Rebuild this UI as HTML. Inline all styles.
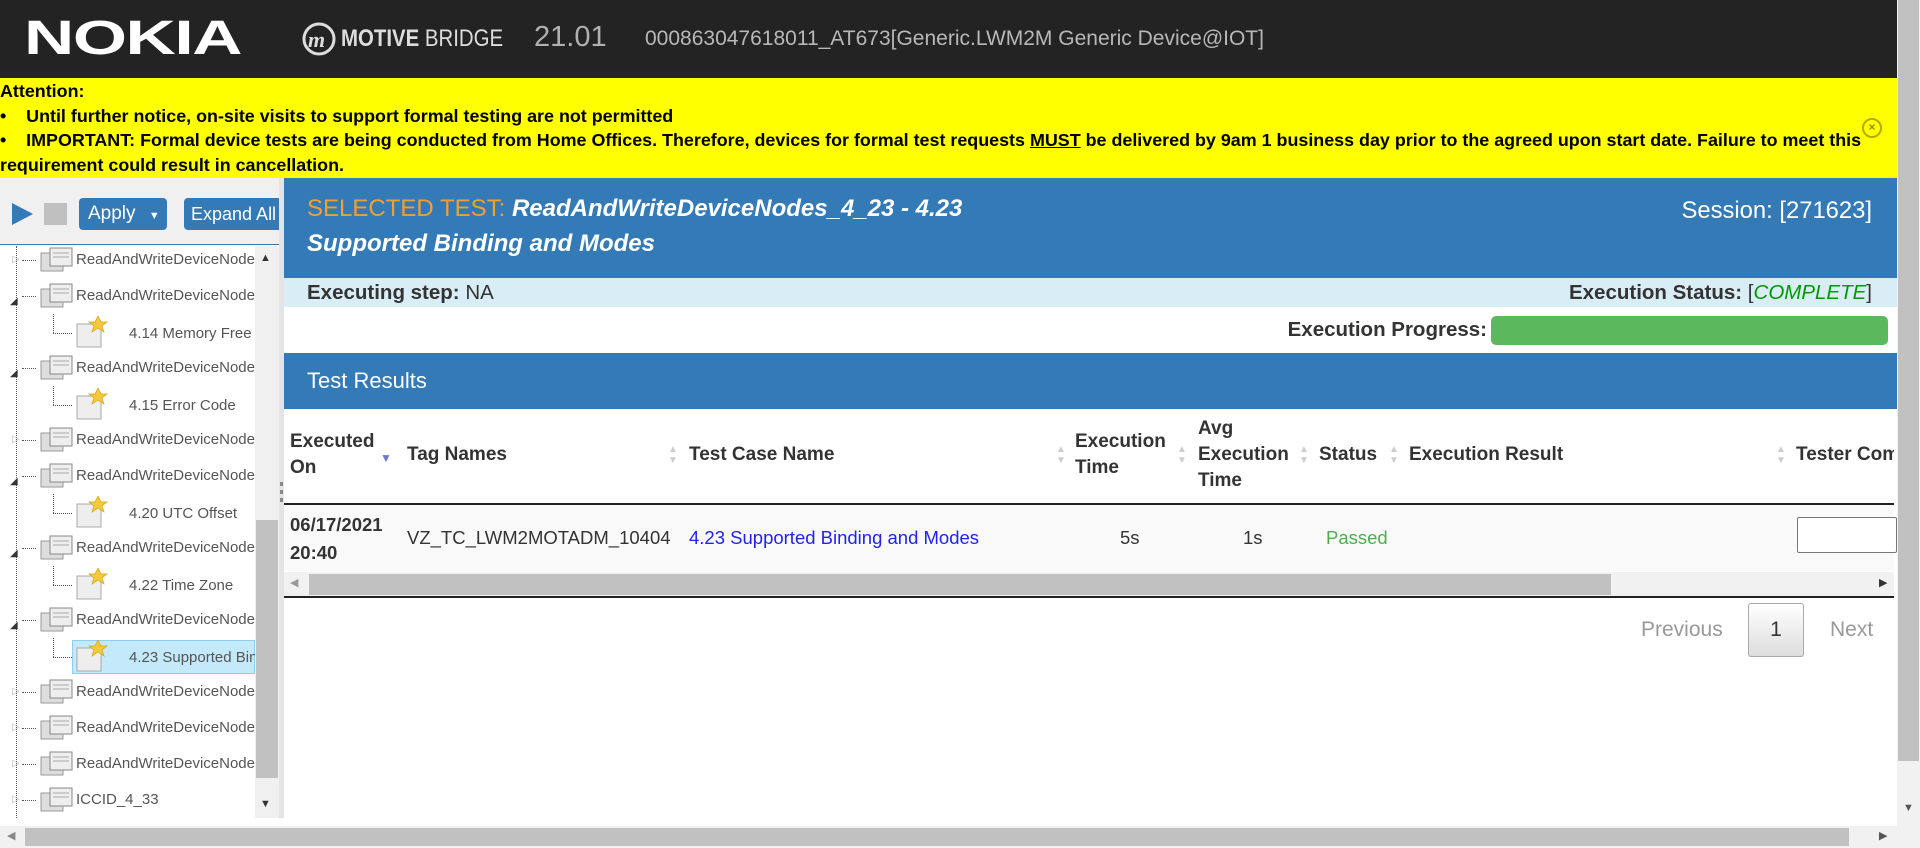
<!DOCTYPE html>
<html><head><meta charset="utf-8"><style>
*{box-sizing:border-box;margin:0;padding:0}
body{width:1920px;height:848px;overflow:hidden;font-family:"Liberation Sans",Arial,sans-serif;background:#fff;position:relative;color:#333}
.a{position:absolute;white-space:nowrap}
.hdr{left:0;top:0;width:1897px;height:78px;background:#232323}
.yl{left:0;top:78px;width:1897px;height:100px;background:#ffff00;font-weight:bold;font-size:17.9px;color:#000;line-height:24.5px;padding-top:1px}
.tree .r{position:absolute;left:0;height:36px;width:255px;font-size:15px;color:#555;line-height:36px;white-space:nowrap}
.ic{position:absolute;width:34px;height:26px}
.th{position:absolute;font-weight:bold;font-size:19px;line-height:26px;color:#333;white-space:nowrap}
</style></head><body>
<div class="a hdr"></div>
<div class="a" style="left:24px;top:14px;font-size:48px;font-weight:bold;color:#fff;transform:scaleX(1.45);transform-origin:0 0;letter-spacing:-1px;line-height:50px">NOKIA</div>
<svg class="a" style="left:301px;top:21px" width="38" height="38" viewBox="0 0 38 38"><circle cx="18" cy="18" r="15" fill="none" stroke="#ddd" stroke-width="3"/><text x="7" y="26" font-family="Liberation Serif" font-style="italic" font-weight="bold" font-size="22" fill="#ddd">m</text></svg>
<div class="a" style="left:341px;top:25px;font-size:24px;color:#ddd;transform:scaleX(.85);transform-origin:0 0"><b>MOTIVE</b> BRIDGE</div>
<div class="a" style="left:534px;top:21px;font-size:29px;color:#b0b0b0">21.01</div>
<div class="a" style="left:645px;top:27px;font-size:21px;color:#b8b8b8">000863047618011_AT673[Generic.LWM2M Generic Device@IOT]</div>

<div class="a yl">Attention:<br>•&nbsp;&nbsp;&nbsp;&nbsp;Until further notice, on-site visits to support formal testing are not permitted<br>•&nbsp;&nbsp;&nbsp;&nbsp;IMPORTANT: Formal device tests are being conducted from Home Offices. Therefore, devices for formal test requests <u>MUST</u> be delivered by 9am 1 business day prior to the agreed upon start date. Failure to meet this<br>requirement could result in cancellation.</div>
<div class="a" style="left:1862px;top:118px;width:20px;height:20px;border:2px solid #b9a800;border-radius:50%;font-size:12px;line-height:15px;text-align:center;color:#9a8c00;font-weight:bold">×</div>

<!-- left panel -->
<div class="a" style="left:0;top:178px;width:282px;height:67px;background:#f0f0f0;border-bottom:1px solid #337ab7"></div>
<svg class="a" style="left:12px;top:203px" width="22" height="22"><polygon points="0,0 21,11 0,22" fill="#337ab7"/></svg>
<div class="a" style="left:44px;top:203px;width:23px;height:22px;background:#c0c0c0"></div>
<div class="a" style="left:79px;top:198px;width:88px;height:32px;background:#337ab7;border-radius:4px;color:#fff;font-size:19px;line-height:32px;padding-left:9px">Apply <span style="font-size:11px;margin-left:8px">▼</span></div>
<div class="a" style="left:184px;top:198px;width:110px;height:32px;background:#337ab7;border-radius:4px;color:#fff;font-size:18px;line-height:32px;padding-left:7px;clip-path:inset(0 12px 0 0)">Expand All</div>
<div class="a tree" style="left:0;top:246px;width:282px;height:572px;background:#fff;overflow:hidden" id="tree"></div>
<div class="a" style="left:255px;top:246px;width:24px;height:572px;background:#f0f0f0"></div>
<div class="a" style="left:256px;top:520px;width:22px;height:258px;background:#c1c1c1"></div>
<div class="a" style="left:260px;top:252px;font-size:11px;color:#333">▲</div>
<div class="a" style="left:260px;top:798px;font-size:11px;color:#333">▼</div>
<div class="a" style="left:279px;top:178px;width:5px;height:640px;background:#e4e4e4"></div>
<div class="a" style="left:280px;top:482px;width:3px;height:24px;background:repeating-linear-gradient(#888 0 4px,transparent 4px 8px)"></div>

<!-- main -->
<div class="a" style="left:284px;top:178px;width:1613px;height:100px;background:#337ab7"></div>
<div class="a" style="left:307px;top:195px;font-size:24px;color:#f0a030;line-height:28px">SELECTED TEST: <b style="color:#fff;font-style:italic">ReadAndWriteDeviceNodes_4_23 - 4.23</b></div>
<div class="a" style="left:307px;top:230px;font-size:24px;color:#fff;font-weight:bold;font-style:italic;line-height:28px">Supported Binding and Modes</div>
<div class="a" style="right:48px;top:197px;font-size:23.8px;color:#fff">Session: [271623]</div>
<div class="a" style="left:284px;top:278px;width:1613px;height:29px;background:#d9edf7"></div>
<div class="a" style="left:307px;top:281px;font-size:20.5px;color:#333"><b>Executing step:</b> NA</div>
<div class="a" style="right:48px;top:281px;font-size:20.5px;color:#333"><b>Execution Status:</b> [<i style="color:#009900">COMPLETE</i>]</div>
<div class="a" style="right:433px;top:318px;font-size:20.5px;font-weight:bold;color:#333">Execution Progress:</div>
<div class="a" style="left:1491px;top:316px;width:397px;height:29px;background:#5cb85c;border-radius:5px"></div>
<div class="a" style="left:284px;top:353px;width:1613px;height:56px;background:#337ab7"></div>
<div class="a" style="left:307px;top:368px;font-size:22px;color:#fff">Test Results</div>

<div class="th" style="left:290px;top:429px">Executed<br>On</div>
<div class="a" style="left:380px;top:451px;font-size:12px;color:#6c78d0">▼</div>
<div class="th" style="left:407px;top:442px">Tag Names</div>
<div class="th" style="left:689px;top:442px">Test Case Name</div>
<div class="th" style="left:1075px;top:429px">Execution<br>Time</div>
<div class="th" style="left:1198px;top:416px">Avg<br>Execution<br>Time</div>
<div class="th" style="left:1319px;top:442px">Status</div>
<div class="th" style="left:1409px;top:442px">Execution Result</div>
<div class="th" style="left:1796px;top:442px;width:98px;overflow:hidden">Tester Comments</div>
<div id="sorts"></div>
<div class="a" style="left:284px;top:503px;width:1610px;height:2px;background:#222"></div>
<div class="a" style="left:284px;top:505px;width:1610px;height:66px;background:#f9f9f9"></div>
<div class="a" style="left:290px;top:511px;font-size:18.5px;font-weight:bold;line-height:28px">06/17/2021<br>20:40</div>
<div class="a" style="left:407px;top:527px;font-size:18.5px">VZ_TC_LWM2MOTADM_10404</div>
<div class="a" style="left:689px;top:527px;font-size:18.5px;color:#2222ee">4.23 Supported Binding and Modes</div>
<div class="a" style="left:1120px;top:527px;font-size:18.5px">5s</div>
<div class="a" style="left:1243px;top:527px;font-size:18.5px">1s</div>
<div class="a" style="left:1326px;top:527px;font-size:18.5px;color:#4cae4c">Passed</div>
<div class="a" style="left:1797px;top:517px;width:100px;height:36px;background:#fff;border:1px solid #777;border-radius:2px"></div>
<div class="a" style="left:284px;top:572px;width:1610px;height:24px;background:#f1f1f1"></div>
<div class="a" style="left:309px;top:574px;width:1302px;height:21px;background:#c1c1c1"></div>
<div class="a" style="left:290px;top:576px;font-size:11px;color:#999">◀</div>
<div class="a" style="left:1879px;top:576px;font-size:11px;color:#333">▶</div>
<div class="a" style="left:284px;top:596px;width:1610px;height:2px;background:#222"></div>
<div class="a" style="left:1641px;top:618px;font-size:21px;color:#999">Previous</div>
<div class="a" style="left:1748px;top:603px;width:56px;height:54px;border:1px solid #aaa;border-radius:3px;background:linear-gradient(#fff,#ddd);text-align:center;line-height:52px;font-size:21px;color:#333">1</div>
<div class="a" style="left:1830px;top:618px;font-size:21px;color:#999">Next</div>

<!-- page scrollbars -->
<div class="a" style="left:1897px;top:0;width:23px;height:848px;background:#f1f1f1"></div>
<div class="a" style="left:1898px;top:0;width:21px;height:761px;background:#c1c1c1"></div>
<div class="a" style="left:1903px;top:802px;font-size:11px;color:#555">▼</div>
<div class="a" style="left:0;top:826px;width:1897px;height:22px;background:#f1f1f1"></div>
<div class="a" style="left:25px;top:828px;width:1824px;height:18px;background:#c1c1c1"></div>
<div class="a" style="left:7px;top:829px;font-size:11px;color:#888">◀</div>
<div class="a" style="left:1879px;top:829px;font-size:11px;color:#555">▶</div>

<script>
var t=document.getElementById('tree'),h='';
var rows=[['p','ReadAndWriteDeviceNode','o'],['p','ReadAndWriteDeviceNode','x'],['c','4.14 Memory Free'],['p','ReadAndWriteDeviceNode','x'],['c','4.15 Error Code'],['p','ReadAndWriteDeviceNode','o'],['p','ReadAndWriteDeviceNode','x'],['c','4.20 UTC Offset'],['p','ReadAndWriteDeviceNode','x'],['c','4.22 Time Zone'],['p','ReadAndWriteDeviceNode','x'],['c','4.23 Supported Bin','s'],['p','ReadAndWriteDeviceNode','o'],['p','ReadAndWriteDeviceNode','o'],['p','ReadAndWriteDeviceNode','o'],['p','ICCID_4_33','o']];
var fold='<svg width="34" height="26"><rect x="1" y="6" width="22" height="18" fill="#ddd" stroke="#999"/><rect x="10" y="1" width="22" height="18" fill="#eee" stroke="#888"/><line x1="13" y1="6" x2="29" y2="6" stroke="#aaa"/><line x1="13" y1="10" x2="29" y2="10" stroke="#aaa"/></svg>';
var leaf='<svg width="34" height="32"><rect x="1" y="8" width="24" height="23" fill="#eee" stroke="#aaa"/><polygon points="22,0 25,6 31,6 26,10 28,16 22,12 16,16 18,10 13,6 19,6" fill="#f5c842" stroke="#d9a400" stroke-width=".7"/></svg>';
h+='<div style="position:absolute;left:16px;top:0;height:572px;border-left:1px dotted #555"></div>';
rows.forEach(function(r,i){var y=i*36-4;
if(r[0]=='p'){h+='<div class="r" style="top:'+y+'px">'+(r[2]=='x'?'<span style="position:absolute;left:10px;top:6px;font-size:10px;color:#333">◢</span>':'<span style="position:absolute;left:12px;top:0;font-size:10px;color:#bbb">▷</span>')+'<div style="position:absolute;left:22px;top:18px;width:14px;border-top:1px dotted #555"></div><div class="ic" style="left:40px;top:5px">'+fold+'</div><span style="position:absolute;left:76px">'+r[1]+'</span></div>';}
else{h+='<div class="r" style="top:'+y+'px">'+(r[2]=='s'?'<div style="position:absolute;left:72px;top:2px;width:183px;height:34px;background:#c3e9fb;border:1px solid #8cd0f0"></div>':'')+'<div style="position:absolute;left:53px;top:0;height:19px;border-left:1px dotted #555"></div><div style="position:absolute;left:53px;top:19px;width:19px;border-top:1px dotted #555"></div><div class="ic" style="left:76px;top:2px;height:32px">'+leaf+'</div><span style="position:absolute;left:129px;top:2px">'+r[1]+'</span></div>';}
});
t.innerHTML=h;
var s='';[668,1056,1177,1299,1389,1776].forEach(function(x){s+='<div class="a" style="left:'+x+'px;top:444px;font-size:10px;line-height:11px;color:#ccc">▲<br>▼</div>';});
document.getElementById('sorts').innerHTML=s;
</script>
</body></html>
